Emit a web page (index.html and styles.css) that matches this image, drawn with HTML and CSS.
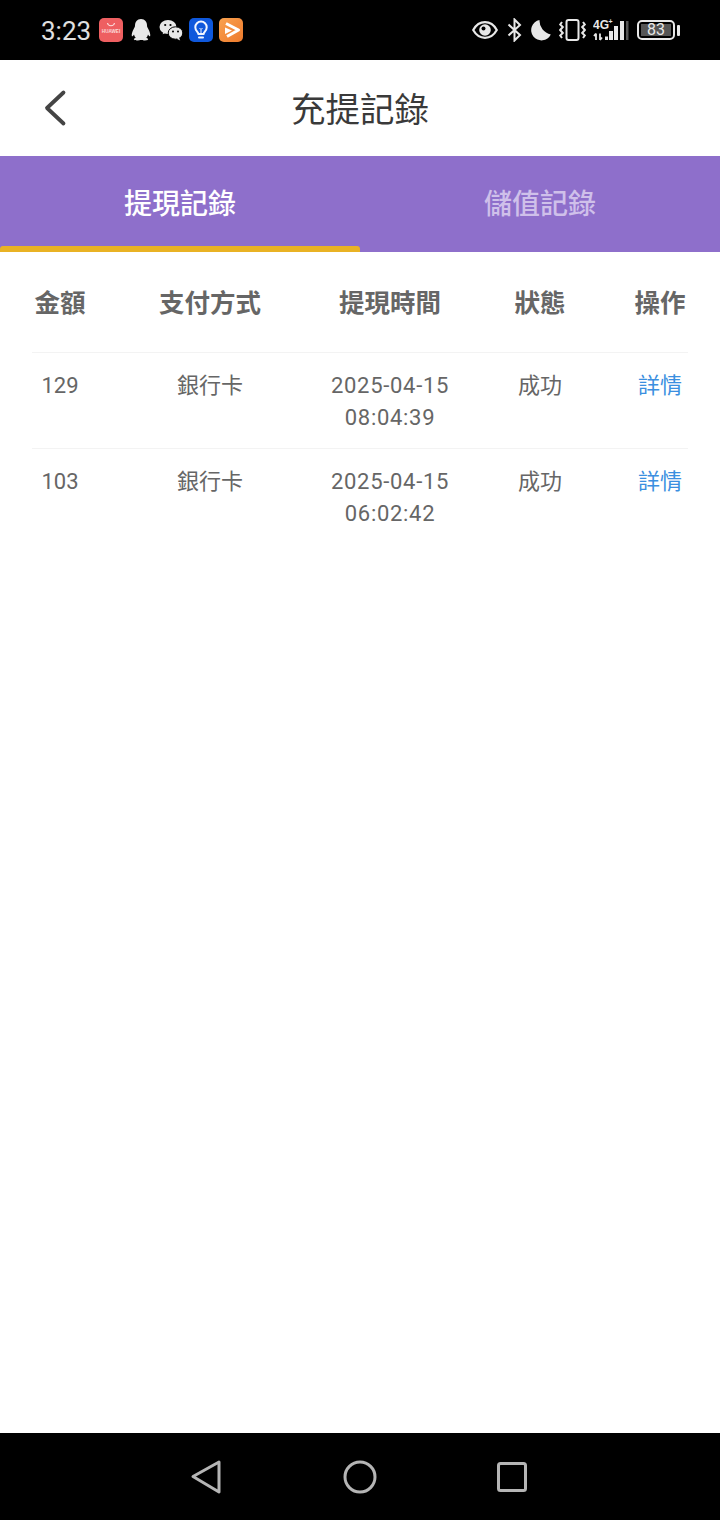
FILE: index.html
```html
<!DOCTYPE html>
<html lang="zh-Hant">
<head>
    <meta charset="UTF-8">
    <title>充提記錄</title>
    <link rel="stylesheet" href="styles.css">
</head>
<body>
    <div class="phone">
        <div class="status-bar">
            <div class="status-left">
                <span class="clock">3:23</span>
                <svg class="app-icon" width="24" height="24" viewBox="0 0 24 24">
                    <rect width="24" height="24" rx="5" fill="#ee5f61"/>
                    <path d="M8.500 5c.6 3.600 6.400 3.600 7 0" fill="none" stroke="#fbdcdc" stroke-width="1.100"/>
                    <text x="12" y="15" text-anchor="middle" font-size="4.600" font-weight="700" fill="#fbdcdc" font-family="Liberation Sans">HUAWEI</text>
                </svg>
                <svg class="app-icon qq" width="20" height="24" viewBox="0 0 20 24">
                    <path d="M10 1c4 0 6 3 6 6.500 0 1.500.6 2.200 1.300 3.500 1.300 2.300 2.300 5.500 1.900 7-.3 1-1.400-.2-2.200-1.500-.2 1.300-.8 2.400-1.700 3.200 1.200.5 2 1.100 1.800 1.900-.2.700-2.500 1.100-4.300.8-1.100-.2-1.400-.5-2.800-.5s-1.700.3-2.800.5c-1.800.3-4.100-.1-4.300-.8-.2-.8.600-1.400 1.800-1.900-.9-.8-1.500-1.900-1.700-3.200C2.200 17.800 1.100 19 .8 18c-.4-1.500.6-4.700 1.900-7C3.400 9.700 4 9 4 7.500 4 4 6 1 10 1z" fill="#e8e8e8"/>
                </svg>
                <svg class="app-icon wechat" width="24" height="24" viewBox="0 0 24 24">
                    <ellipse cx="9" cy="9" rx="8.500" ry="7" fill="#e8e8e8"/>
                    <path d="M4.500 13l-.8 3.200 3.600-1.800z" fill="#e8e8e8"/>
                    <circle cx="6.200" cy="7" r="1.100" fill="#000"/>
                    <circle cx="11.500" cy="7" r="1.100" fill="#000"/>
                    <ellipse cx="16.500" cy="15" rx="7.300" ry="6.200" fill="#e8e8e8" stroke="#000" stroke-width="1"/>
                    <path d="M20 19.500l1.200 3-3.600-1.800z" fill="#e8e8e8"/>
                    <circle cx="14" cy="13.500" r="1" fill="#000"/>
                    <circle cx="19" cy="13.500" r="1" fill="#000"/>
                </svg>
                <svg class="app-icon" width="24" height="24" viewBox="0 0 24 24">
                    <rect width="24" height="24" rx="5" fill="#0f58dc"/>
                    <path d="M9.300 16c0-2-3-3-3-6.800a5.700 5.700 0 0 1 11.400 0c0 3.800-3 4.800-3 6.800z" fill="none" stroke="#f2f6ff" stroke-width="2" stroke-linejoin="round"/>
                    <path d="M10 19.500h4" stroke="#f2f6ff" stroke-width="2" stroke-linecap="round"/>
                    <path d="M12 15.500v-4l-1.500-1.500M12 11.500l1.500-1.500" fill="none" stroke="#f2f6ff" stroke-width="1"/>
                </svg>
                <svg class="app-icon" width="24" height="24" viewBox="0 0 24 24">
                    <defs>
                        <linearGradient id="orangeFill" x1="0" y1="0" x2="1" y2="1">
                            <stop offset="0" stop-color="#f9a24f"/>
                            <stop offset="1" stop-color="#ee7a2c"/>
                        </linearGradient>
                    </defs>
                    <rect width="24" height="24" rx="5" fill="url(#orangeFill)"/>
                    <path d="M7 5.500L19.500 12 8 18.500" fill="none" stroke="#fff" stroke-width="3" stroke-linejoin="round"/>
                    <path d="M6 9.500l7 3-7 3.500z" fill="#fff"/>
                </svg>
            </div>
            <div class="status-right">
                <svg class="eye" width="26" height="20" viewBox="0 0 26 20">
                    <path d="M1.200 10C4 5 8 2.200 13 2.200S22 5 24.800 10C22 15 18 17.800 13 17.800S4 15 1.200 10z" fill="none" stroke="#e8e8e8" stroke-width="2.200"/>
                    <circle cx="13" cy="10" r="5.800" fill="#e8e8e8"/>
                    <circle cx="11.500" cy="8.500" r="2" fill="#000"/>
                </svg>
                <svg class="bt" width="15" height="24" viewBox="0 0 15 24">
                    <path d="M1.500 6.500L13 17l-5.500 5.500V1.500L13 7 1.500 17.500" fill="none" stroke="#e8e8e8" stroke-width="2"/>
                </svg>
                <svg class="moon" width="21" height="22" viewBox="0 0 21 22">
                    <path d="M9.500 1A10.300 10.300 0 1 0 20.800 15.500 14 14 0 0 1 9.500 1z" fill="#e8e8e8"/>
                </svg>
                <svg class="vibrate" width="27" height="22" viewBox="0 0 27 22">
                    <rect x="7.500" y="1" width="12" height="20" rx="2" fill="none" stroke="#e8e8e8" stroke-width="2"/>
                    <path d="M3 3L1.200 5.500 3.800 8l-2.600 3 2.600 3-2.600 2.500L3 19M24 3l1.800 2.500L23.200 8l2.600 3-2.600 3 2.600 2.500L24 19" fill="none" stroke="#e8e8e8" stroke-width="2"/>
                </svg>
                <svg class="signal" width="36" height="24" viewBox="0 0 36 24">
                    <text x="0" y="10.500" font-size="12" font-weight="700" fill="#e8e8e8" font-family="Liberation Sans">4G</text>
                    <text x="15.500" y="6" font-size="7" font-weight="700" fill="#e8e8e8" font-family="Liberation Sans">+</text>
                    <path d="M3 15.500v6.500M1 18l2-2.500M7 22v-6.500M7 22l2-2.500" fill="none" stroke="#e8e8e8" stroke-width="1.800"/>
                    <rect x="12" y="18.500" width="3" height="3.500" fill="#e8e8e8"/>
                    <rect x="16" y="13" width="4" height="9" fill="#e8e8e8"/>
                    <rect x="21" y="8" width="4" height="14" fill="#e8e8e8"/>
                    <rect x="27" y="3" width="4" height="19" fill="#e8e8e8"/>
                    <rect x="33" y="3" width="2.500" height="19" fill="#555"/>
                </svg>
                <div class="battery">
                    <div class="battery-body"><span class="battery-level">83</span></div>
                    <div class="battery-cap"></div>
                </div>
            </div>
        </div>

        <header class="top-bar">
            <svg class="back" width="24" height="38" viewBox="0 0 24 38">
                <path d="M20.500 3.500L4 19l16.500 15.500" fill="none" stroke="#444" stroke-width="3.800" stroke-linecap="round" stroke-linejoin="round"/>
            </svg>
            <h1 class="page-title">充提記錄</h1>
        </header>

        <nav class="tabs">
            <div class="tab active">提現記錄</div>
            <div class="tab">儲值記錄</div>
        </nav>

        <main class="records">
            <div class="row head">
                <div>金額</div>
                <div>支付方式</div>
                <div>提現時間</div>
                <div>狀態</div>
                <div>操作</div>
            </div>
            <div class="row">
                <div>129</div>
                <div>銀行卡</div>
                <div class="time"><span>2025-04-15</span><span>08:04:39</span></div>
                <div>成功</div>
                <div class="detail">詳情</div>
            </div>
            <div class="row">
                <div>103</div>
                <div>銀行卡</div>
                <div class="time"><span>2025-04-15</span><span>06:02:42</span></div>
                <div>成功</div>
                <div class="detail">詳情</div>
            </div>
        </main>

        <div class="nav-bar">
            <svg width="34" height="36" viewBox="0 0 34 36">
                <path d="M30 3L4 17.500 30 33z" fill="none" stroke="#b5b5b5" stroke-width="3" stroke-linejoin="round"/>
            </svg>
            <svg width="34" height="34" viewBox="0 0 34 34">
                <circle cx="17" cy="17" r="15" fill="none" stroke="#b5b5b5" stroke-width="3"/>
            </svg>
            <svg width="30" height="30" viewBox="0 0 30 30">
                <rect x="1.500" y="1.500" width="27" height="27" rx="2" fill="none" stroke="#b5b5b5" stroke-width="3"/>
            </svg>
        </div>
    </div>
</body>
</html>
```

FILE: styles.css
```css
* {
    box-sizing: border-box;
}

body {
    margin: 0;
    font-family: Roboto, "Noto Sans CJK TC", sans-serif;
    background: #fff;
}

.phone {
    width: 720px;
    height: 1520px;
    display: flex;
    flex-direction: column;
}

/* status bar */
.status-bar {
    height: 60px;
    background: #000;
    display: flex;
    justify-content: space-between;
    align-items: center;
    padding: 0 40px 0 41px;
    flex-shrink: 0;
}

.status-left,
.status-right {
    display: flex;
    align-items: center;
}

.clock {
    font-size: 26px;
    color: #e0e0e0;
    margin-top: 2px;
    margin-right: 8px;
}

.app-icon {
    margin-right: 6px;
}

.app-icon.qq {
    margin-left: 2px;
    margin-right: 8px;
}

.status-right svg {
    margin-right: 8px;
}

.status-right .eye {
    margin-right: 9px;
}

.status-right .vibrate {
    margin-right: 7px;
}

.battery {
    display: flex;
    align-items: center;
    gap: 2px;
}

.battery-body {
    width: 38px;
    height: 20px;
    border: 2px solid #e8e8e8;
    border-radius: 5px;
    padding: 2px;
    display: flex;
}

.battery-level {
    flex: 1;
    background: #555;
    color: #e8e8e8;
    font-size: 16px;
    line-height: 12px;
    text-align: center;
}

.battery-cap {
    width: 3px;
    height: 11px;
    background: #e8e8e8;
    border-radius: 1px;
}

/* header */
.top-bar {
    height: 96px;
    background: #fff;
    display: flex;
    align-items: center;
    justify-content: center;
    padding-bottom: 2px;
    position: relative;
    flex-shrink: 0;
}

.back {
    position: absolute;
    left: 43px;
    top: 29px;
}

.page-title {
    margin: 0;
    font-size: 34.5px;
    font-weight: 400;
    color: #3a3a3a;
}

/* tabs */
.tabs {
    height: 96px;
    background: #8e6fcb;
    display: flex;
    flex-shrink: 0;
}

.tab {
    flex: 1;
    display: flex;
    align-items: center;
    justify-content: center;
    padding-bottom: 5px;
    font-size: 28px;
    font-weight: 500;
    color: #cfc0ea;
    position: relative;
}

.tab.active {
    color: #fff;
}

.tab.active::after {
    content: "";
    position: absolute;
    left: 0;
    right: 0;
    bottom: 0;
    height: 6px;
    background: #e9b224;
    border-radius: 3px 3px 0 0;
}

/* record table */
.records {
    flex: 1;
    padding: 0 32px;
    background: #fff;
}

.row {
    display: grid;
    grid-template-columns: 56px 244px 116px 184px 56px;
    padding: 17px 0 14px;
    border-bottom: 1px solid #f3f3f3;
    font-size: 22px;
    line-height: 32px;
    color: #666;
    text-align: center;
    white-space: nowrap;
}

.row:last-child {
    border-bottom: none;
}

.row.head {
    height: 101px;
    padding: 1px 0 0;
    align-items: center;
    font-size: 25.500px;
    font-weight: 700;
}

.time {
    display: flex;
    flex-direction: column;
    align-items: center;
    letter-spacing: 0.7px;
}

.detail {
    color: #3b8fe0;
}

/* system navigation */
.nav-bar {
    height: 87px;
    background: #000;
    display: flex;
    align-items: center;
    justify-content: center;
    gap: 120px;
    padding-right: 4px;
    flex-shrink: 0;
}
```
